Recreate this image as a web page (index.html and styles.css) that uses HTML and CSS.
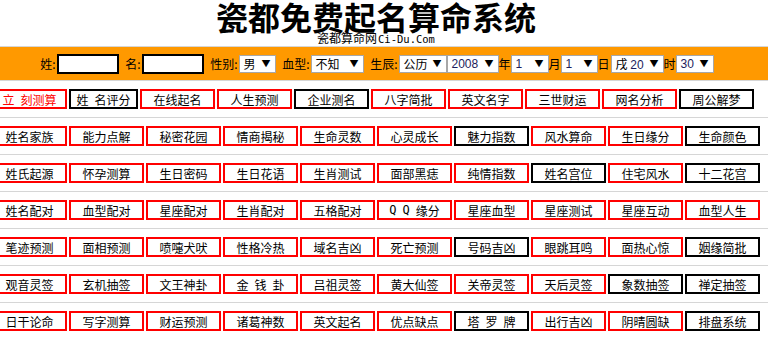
FILE: index.html
```html
<!DOCTYPE html>
<html lang="zh-CN">

<head>
    <meta charset="UTF-8">
    <title>瓷都免费起名算命系统</title>
    <link rel="stylesheet" href="styles.css">
</head>

<body>
    <div class="head">
        <div class="wrap">
            <h1>瓷都免费起名算命系统</h1>
            <div class="sub">瓷都算命网<span class="en">Ci-Du.Com</span></div>
        </div>
    </div>

    <!-- 输入栏 -->
    <div class="bar">
        <div class="wrap form">
            <span class="lbl w18">姓:</span>
            <input type="text" class="txt">
            <span class="lbl w23">名:</span>
            <input type="text" class="txt">
            <span class="lbl w35">性别:</span>
            <span class="sel" style="width: 37px;"><span>男</span><i>▼</i></span>
            <span class="lbl w35">血型:</span>
            <span class="sel" style="width: 53px;"><span>不知</span><i>▼</i></span>
            <span class="lbl w35">生辰:</span>
            <span class="sel" style="width: 48px;"><span>公历</span><i>▼</i></span>
            <span class="sel" style="width: 52px;"><span class="num">2008</span><i>▼</i></span>
            <span class="lbl w12">年</span>
            <span class="sel" style="width: 38px;"><span class="num">1</span><i>▼</i></span>
            <span class="lbl w12">月</span>
            <span class="sel" style="width: 37px;"><span class="num">1</span><i>▼</i></span>
            <span class="lbl w13">日</span>
            <span class="sel" style="width: 53px;"><span>戌 <span class="num">20</span></span><i>▼</i></span>
            <span class="lbl w12">时</span>
            <span class="sel" style="width: 38px;"><span class="num">30</span><i>▼</i></span>
        </div>
    </div>

    <div class="sec">
        <div class="wrap nav">
            <a href="#" class="hot">立&ensp;刻测算</a>
            <a href="#" class="k narrow">姓&ensp;名评分</a>
            <a href="#">在线起名</a>
            <a href="#">人生预测</a>
            <a href="#" class="k">企业测名</a>
            <a href="#">八字简批</a>
            <a href="#">英文名字</a>
            <a href="#">三世财运</a>
            <a href="#">网名分析</a>
            <a href="#" class="k">周公解梦</a>
        </div>
    </div>
    <div class="sec">
        <div class="wrap nav">
            <a href="#">姓名家族</a>
            <a href="#">能力点解</a>
            <a href="#">秘密花园</a>
            <a href="#">情商揭秘</a>
            <a href="#">生命灵数</a>
            <a href="#">心灵成长</a>
            <a href="#" class="k">魅力指数</a>
            <a href="#">风水算命</a>
            <a href="#">生日缘分</a>
            <a href="#" class="k">生命颜色</a>
        </div>
    </div>
    <div class="sec">
        <div class="wrap nav">
            <a href="#">姓氏起源</a>
            <a href="#">怀孕测算</a>
            <a href="#">生日密码</a>
            <a href="#">生日花语</a>
            <a href="#">生肖测试</a>
            <a href="#">面部黑痣</a>
            <a href="#">纯情指数</a>
            <a href="#" class="k">姓名宫位</a>
            <a href="#">住宅风水</a>
            <a href="#" class="k">十二花宫</a>
        </div>
    </div>
    <div class="sec">
        <div class="wrap nav">
            <a href="#">姓名配对</a>
            <a href="#">血型配对</a>
            <a href="#">星座配对</a>
            <a href="#">生肖配对</a>
            <a href="#">五格配对</a>
            <a href="#"><span class="q">Q</span>&ensp;<span class="q">Q</span>&ensp;缘分</a>
            <a href="#">星座血型</a>
            <a href="#">星座测试</a>
            <a href="#">星座互动</a>
            <a href="#">血型人生</a>
        </div>
    </div>
    <div class="sec">
        <div class="wrap nav">
            <a href="#">笔迹预测</a>
            <a href="#">面相预测</a>
            <a href="#">喷嚏犬吠</a>
            <a href="#">性格冷热</a>
            <a href="#">域名吉凶</a>
            <a href="#">死亡预测</a>
            <a href="#" class="k">号码吉凶</a>
            <a href="#">眼跳耳鸣</a>
            <a href="#">面热心惊</a>
            <a href="#" class="k">姻缘简批</a>
        </div>
    </div>
    <div class="sec">
        <div class="wrap nav">
            <a href="#">观音灵签</a>
            <a href="#">玄机抽签</a>
            <a href="#">文王神卦</a>
            <a href="#">金&ensp;钱&ensp;卦</a>
            <a href="#">吕祖灵签</a>
            <a href="#">黄大仙签</a>
            <a href="#">关帝灵签</a>
            <a href="#">天后灵签</a>
            <a href="#" class="k">象数抽签</a>
            <a href="#" class="k">禅定抽签</a>
        </div>
    </div>
    <div class="sec">
        <div class="wrap nav">
            <a href="#">日干论命</a>
            <a href="#">写字测算</a>
            <a href="#">财运预测</a>
            <a href="#">诸葛神数</a>
            <a href="#">英文起名</a>
            <a href="#">优点缺点</a>
            <a href="#" class="k">塔&ensp;罗&ensp;牌</a>
            <a href="#">出行吉凶</a>
            <a href="#">阴晴圆缺</a>
            <a href="#" class="k">排盘系统</a>
        </div>
    </div>
</body>

</html>
```

FILE: styles.css
```css
* {
    padding: 0;
    margin: 0;
    box-sizing: border-box;
}

body {
    font-family: "Noto Sans CJK SC", "Liberation Sans", sans-serif;
    font-size: 12px;
    color: #000;
    background: #fff;
    overflow: hidden;
}

/* 页面内容整体左移 8px */
.wrap {
    width: 768px;
    margin-left: -8px;
}

.head {
    height: 46px;
    text-align: center;
}

h1 {
    font-size: 32px;
    font-weight: 700;
    line-height: 33px;
    height: 32px;
}

.sub {
    font-size: 12px;
    line-height: 12px;
    height: 14px;
}

.sub .en {
    font-family: "DejaVu Sans Mono", monospace;
    font-size: 10.5px;
    margin-left: 1px;
}

.bar {
    background-color: #ff9900;
    border-top: 1px solid #d6d6d6;
    border-bottom: 1px solid #d6d6d6;
}

.form {
    display: flex;
    align-items: center;
    justify-content: center;
    height: 33px;
}

.lbl {
    display: inline-block;
    text-align: right;
    padding-right: 1px;
    white-space: nowrap;
}

.w12 { width: 12px; text-align: left; padding-right: 0; }
.w13 { width: 13px; text-align: left; padding-right: 0; }
.w18 { width: 18px; }
.w23 { width: 23px; }
.w35 { width: 35px; }

.txt {
    width: 62px;
    height: 20px;
    border: 2px solid #000;
    background: #fff;
    outline: none;
}

.sel {
    display: inline-flex;
    align-items: center;
    justify-content: space-between;
    height: 18px;
    padding: 0 4px 0 4px;
    background: #fff;
    border: 1px solid #a7a7a7;
    white-space: nowrap;
}

.sel .num {
    font-family: "Liberation Sans", sans-serif;
    color: #1c1c5c;
}

.sel i {
    font-style: normal;
    font-size: 9px;
}

.sec {
    border-bottom: 1px solid #d6d6d6;
}

.nav {
    display: flex;
    gap: 2px;
    padding: 8px 0;
}

.nav a {
    display: flex;
    align-items: center;
    justify-content: center;
    width: 75px;
    height: 20px;
    border: 2px solid #ff0000;
    color: #000;
    text-decoration: none;
    white-space: nowrap;
}

.nav a.k {
    border-color: #000;
}

.nav a.narrow {
    width: 69px;
}

.nav a.hot {
    color: #ff0000;
}

.q {
    font-family: "DejaVu Sans Mono", monospace;
}
```
